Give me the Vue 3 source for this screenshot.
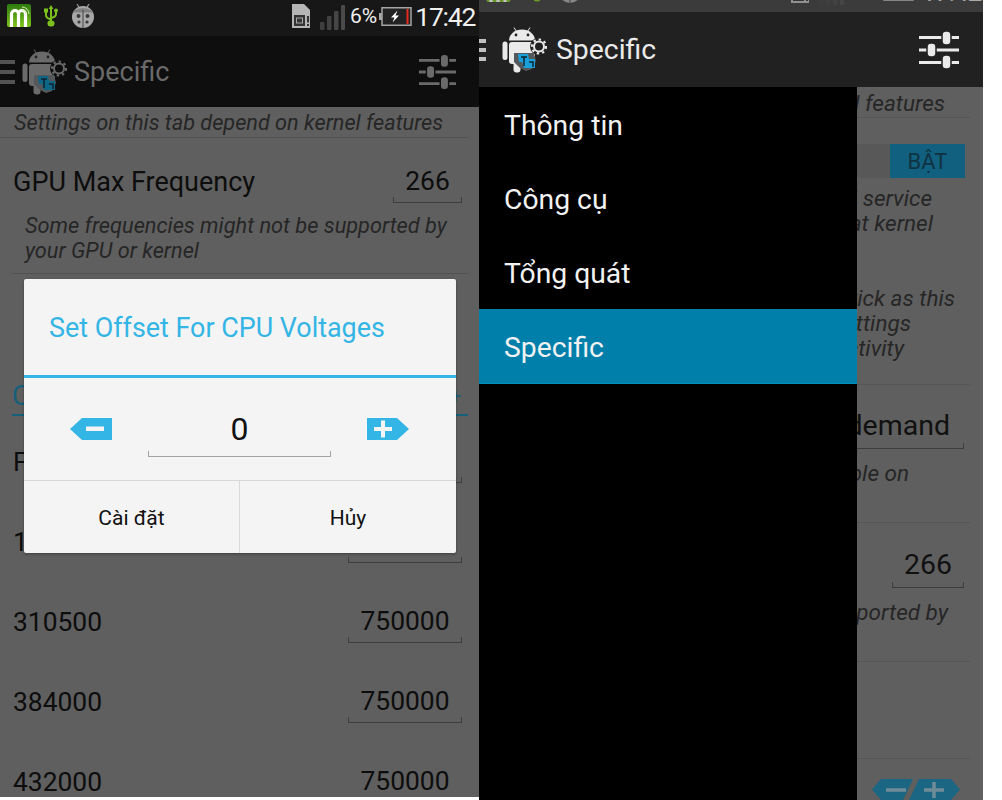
<script setup>
const voltageRows = [
  { freq: 'Frequency', volt: '' },
  { freq: '188000', volt: '750000' },
  { freq: '310500', volt: '750000' },
  { freq: '384000', volt: '750000' },
  { freq: '432000', volt: '750000' }
]
const drawerItems = [
  { label: 'Thông tin', active: false },
  { label: 'Công cụ', active: false },
  { label: 'Tổng quát', active: false },
  { label: 'Specific', active: true }
]
const serviceLines = [
  { text: 'background service', right: 51 },
  { text: 'without that kernel', right: 50 }
]
const quickLines = [
  { text: 'Do not tick as this', right: 28 },
  { text: 'settings', right: 72 },
  { text: 'activity', right: 79 }
]
</script>

<template>
  <div class="page">
    <svg class="defs" width="0" height="0" aria-hidden="true">
      <symbol id="droid" viewBox="0 0 45 47">
        <path d="M12 1.500l2.500 4M28 1.500l-2.500 4" stroke="currentColor" stroke-width="1" fill="none" />
        <path d="M7 14.500a13 11 0 0 1 26 0z" fill="currentColor" />
        <circle cx="14" cy="9" r="1.400" fill="#222" />
        <circle cx="26" cy="9" r="1.400" fill="#222" />
        <rect x="7" y="16" width="26" height="22" rx="3" fill="currentColor" />
        <rect x="11.500" y="34" width="7" height="12.500" rx="3" fill="currentColor" />
        <rect x="21.500" y="34" width="7" height="10" rx="3" fill="currentColor" />
        <rect x="0.500" y="15.500" width="5" height="18.500" rx="2.500" fill="currentColor" />
        <circle cx="37" cy="20.500" r="9" fill="var(--bar)" />
        <circle cx="37" cy="20.500" r="5" fill="none" stroke="currentColor" stroke-width="2" />
        <circle cx="37" cy="20.500" r="7" fill="none" stroke="currentColor" stroke-width="2.200" stroke-dasharray="2.400 3" />
        <path d="M12 27h20l2 8-4 8-6 2-6-3-6-6z" fill="#55585a" />
        <path d="M16 28h10l1 5h6v9H22l-2-6h-3z" fill="var(--tile)" />
        <path d="M19 31h6M22 31v9M27 36h4v5" stroke="#123" stroke-width="1.500" fill="none" />
      </symbol>
      <symbol id="tune" viewBox="0 0 40 38">
        <g fill="none" stroke="currentColor" stroke-width="3">
          <path d="M0 6.500h40M0 19h40M0 31.500h40" />
        </g>
        <g fill="currentColor" stroke="var(--bar)" stroke-width="1.500">
          <rect x="23" y="0" width="9" height="14" rx="4" />
          <rect x="8" y="12" width="9" height="14" rx="4" />
          <rect x="23" y="24" width="9" height="14" rx="4" />
        </g>
      </symbol>
      <symbol id="mapp" viewBox="0 0 24 23">
        <defs>
          <linearGradient id="mgrad" x1="0" y1="0" x2="0" y2="1">
            <stop offset="0" stop-color="#2d7a10" />
            <stop offset="1" stop-color="#7fc41c" />
          </linearGradient>
        </defs>
        <rect width="24" height="23" rx="2" fill="url(#mgrad)" />
        <path d="M4.500 23V10a3.500 3.500 0 0 1 7 0v13M11.500 10a3.500 3.500 0 0 1 7 0v13" fill="none" stroke="#fff" stroke-width="3.200" />
        <path d="M15 3a7 7 0 0 1 7 7M15 6a4 4 0 0 1 4 4" fill="none" stroke="#d8ecb0" stroke-width="1" />
      </symbol>
      <symbol id="usb" viewBox="0 0 14 22">
        <path d="M7 0l2.400 4H8v11.500a3 3 0 0 1-1 6 3 3 0 0 1-1-6V4H4.600z" fill="#7cc11d" />
        <path d="M2 7v3.500q0 2.500 5 4M12 7v2q0 3-5 4" fill="none" stroke="#7cc11d" stroke-width="2" />
        <rect x="0" y="3.500" width="4" height="4" fill="#7cc11d" />
        <circle cx="12" cy="5.500" r="2" fill="#7cc11d" />
      </symbol>
      <symbol id="bug" viewBox="0 0 24 24">
        <path d="M6 0l3 5M18 0l-3 5" stroke="#9a9a9a" stroke-width="1.200" />
        <circle cx="12" cy="13" r="11" fill="#a8a8a8" />
        <path d="M3 6.500q9-5 18 0l1 2H2z" fill="#808080" />
        <path d="M12 6v18" stroke="#444" stroke-width="1" />
        <circle cx="7.500" cy="12" r="2" fill="#3a3a3a" />
        <circle cx="16.500" cy="12" r="2" fill="#3a3a3a" />
        <circle cx="8" cy="18" r="1.600" fill="#3a3a3a" />
        <circle cx="16" cy="18" r="1.600" fill="#3a3a3a" />
      </symbol>
      <symbol id="sim" viewBox="0 0 18 24">
        <path d="M0 0h12l6 6v18H0z" fill="#b5b5b5" />
        <rect x="2" y="11" width="11" height="11" fill="#333" />
        <rect x="4.500" y="14" width="6" height="5" fill="none" stroke="#aaa" stroke-width="1" />
        <rect x="15" y="12" width="2" height="6.500" fill="#333" />
        <rect x="15" y="20" width="2" height="2" fill="#333" />
      </symbol>
      <symbol id="bars" viewBox="0 0 25 25">
        <rect x="0" y="17" width="4.500" height="8" rx="1" fill="#3f3f3f" />
        <rect x="7" y="11" width="4.500" height="14" rx="1" fill="#424242" />
        <rect x="14" y="6" width="4.500" height="19" rx="1" fill="#464646" />
        <rect x="21" y="0" width="4" height="25" rx="1" fill="#4a4a4a" />
      </symbol>
      <symbol id="batt" viewBox="0 0 33 19">
        <rect x="3" y="0.750" width="29" height="17.500" fill="#222" stroke="#a5a5a5" stroke-width="1.500" />
        <rect x="0" y="6" width="3" height="7" fill="#a5a5a5" />
        <rect x="27.500" y="2" width="2" height="15" fill="#e52b1c" />
        <path d="M18.500 3.500l-6.500 7h3.500l-2 5 6.500-7h-3.500z" fill="#fff" />
      </symbol>
    </svg>

    <!-- Left phone: dialog over a dimmed settings page -->
    <section class="phone phone-left">
      <div class="status">
        <svg class="i-m"><use href="#mapp" /></svg>
        <svg class="i-usb"><use href="#usb" /></svg>
        <svg class="i-bug"><use href="#bug" /></svg>
        <svg class="i-sim"><use href="#sim" /></svg>
        <svg class="i-bars"><use href="#bars" /></svg>
        <span class="pct">6%</span>
        <svg class="i-batt"><use href="#batt" /></svg>
        <span class="clock">17:42</span>
      </div>
      <header class="bar">
        <div class="burger"><i></i><i></i><i></i></div>
        <svg class="droid"><use href="#droid" /></svg>
        <span class="bar-title">Specific</span>
        <svg class="tune"><use href="#tune" /></svg>
      </header>

      <main class="page-body">
        <p class="top-hint">Settings on this tab depend on kernel features</p>
        <div class="gpu-row">
          <span class="label label-gpu">GPU Max Frequency</span>
          <span class="val val-short">266</span>
        </div>
        <p class="hint">Some frequencies might not be supported by<br />your GPU or kernel</p>
        <div class="section-head">
          <span>CPU Voltages</span>
          <span class="plus">+</span>
        </div>
        <div v-for="row in voltageRows" :key="row.freq" class="v-row">
          <span class="label">{{ row.freq }}</span>
          <span class="val val-wide">{{ row.volt || '&#160;' }}</span>
        </div>
      </main>

      <div class="dialog">
        <h2 class="d-title">Set Offset For CPU Voltages</h2>
        <div class="d-body">
          <svg class="step" viewBox="0 0 42 22">
            <path d="M0 11L12 0h30v22H12z" fill="#33b5e5" />
            <rect x="16" y="8.500" width="18" height="4.500" fill="#f4f4f4" />
          </svg>
          <div class="d-input">0</div>
          <svg class="step" viewBox="0 0 42 22">
            <path d="M42 11L30 22H0V0h30z" fill="#33b5e5" />
            <path d="M7 11h18M16 2.500v17" stroke="#f4f4f4" stroke-width="4" />
          </svg>
        </div>
        <div class="d-actions">
          <button type="button">Cài đặt</button>
          <button type="button">Hủy</button>
        </div>
      </div>
    </section>

    <!-- Right phone: navigation drawer open -->
    <section class="phone phone-right">
      <div class="status">
        <div class="status-inner">
          <svg class="i-m"><use href="#mapp" /></svg>
          <svg class="i-usb"><use href="#usb" /></svg>
          <svg class="i-bug"><use href="#bug" /></svg>
          <svg class="i-sim"><use href="#sim" /></svg>
          <svg class="i-bars"><use href="#bars" /></svg>
          <span class="pct">6%</span>
          <svg class="i-batt"><use href="#batt" /></svg>
          <span class="clock">17:42</span>
        </div>
      </div>
      <header class="bar">
        <div class="burger"><i></i><i></i><i></i></div>
        <svg class="droid"><use href="#droid" /></svg>
        <span class="bar-title">Specific</span>
        <svg class="tune"><use href="#tune" /></svg>
      </header>

      <div class="split">
        <nav class="drawer">
          <a v-for="item in drawerItems" :key="item.label" :class="{ active: item.active }">{{ item.label }}</a>
        </nav>
        <div class="strip">
          <p class="s-line s-first">depend on kernel features</p>
          <hr class="s-div" />
          <div class="toggle"><span class="track"></span><span class="on">BẬT</span></div>
          <div class="s-group g1">
            <p v-for="l in serviceLines" :key="l.text" class="s-line" :style="{ paddingRight: l.right + 'px' }">{{ l.text }}</p>
          </div>
          <div class="s-group g2">
            <p v-for="l in quickLines" :key="l.text" class="s-line" :style="{ paddingRight: l.right + 'px' }">{{ l.text }}</p>
          </div>
          <hr class="s-div d3" />
          <div class="s-val s-demand"><span>ondemand</span></div>
          <p class="s-line s-on">Not available on</p>
          <hr class="s-div d4" />
          <div class="s-val s-266">266</div>
          <p class="s-line s-by">not be supported by</p>
          <hr class="s-div d4" />
          <hr class="s-div d5" />
          <svg class="s-step" viewBox="0 0 88 21">
            <path d="M0 10.500L9 0h32l-10 21H9z" fill="#1b6682" />
            <path d="M47 0h32l9 10.500L79 21H37z" fill="#1b6682" />
            <path d="M14 11h20M52 11h20M62 3v16" stroke="#6f8c98" stroke-width="3.500" fill="none" />
          </svg>
        </div>
      </div>
    </section>
  </div>
</template>

<style>
html, body { margin: 0; background: #fff; }
</style>

<style scoped>
.page {
  display: flex;
  align-items: flex-start;
  width: 1002px;
  height: 800px;
  overflow: hidden;
  background: #fff;
  font-family: Roboto, "Noto Sans", sans-serif;
}
.defs { position: absolute; }
.phone { position: relative; flex: none; overflow: hidden; background: #5f5f5f; }
.phone-left { width: 479px; height: 797px; }
.phone-right { width: 504px; height: 800px; }
p { margin: 0; }

/* status bars */
.status { display: flex; align-items: flex-start; }
.phone-left .status { height: 36px; background: #171717; color: #f0f0f0; }
.phone-right .status { height: 12px; background: #3b3b3b; color: #d8d8d8; overflow: hidden; }
.status-inner { display: flex; align-items: flex-start; width: 100%; margin-top: -25px; height: 36px; opacity: .7; }
.status svg { flex: none; }
.i-m { width: 24px; height: 23px; margin: 4px 0 0 7px; }
.i-usb { width: 14px; height: 22px; margin: 5px 0 0 13px; }
.i-bug { width: 24px; height: 24px; margin: 4px 0 0 13px; }
.i-sim { width: 18px; height: 24px; margin: 4px 0 0 197px; }
.i-bars { width: 25px; height: 25px; margin: 5px 0 0 10px; }
.i-batt { width: 33px; height: 19px; margin: 7px 0 0 2px; }
.pct { font-size: 21px; line-height: 32px; margin-left: 5px; }
.clock { font-size: 26.500px; line-height: 33px; margin-left: 3px; letter-spacing: -1.200px; }
.phone-right .i-m { margin-left: 7px; width: 25px; }
.phone-right .i-usb { margin-left: 19px; }
.phone-right .i-bug { margin-left: 14px; }
.phone-right .i-sim { margin-left: 209px; }
.phone-right .pct { margin-left: 8px; }
.phone-right .clock { margin-left: 7px; }

/* action bars */
.bar { display: flex; align-items: center; --tile: #1aa0d8; }
.phone-left .bar { height: 71px; background: #0e0e0e; color: #6a6a6a; --bar: #0e0e0e; --tile: #0c6684; }
.phone-right .bar { height: 75px; background: #212121; color: #eaeaea; --bar: #212121; }
.burger { display: flex; flex-direction: column; flex: none; }
.burger i { display: block; height: 4px; background: currentColor; }
.phone-left .burger { width: 15px; gap: 6px; opacity: .75; }
.phone-right .burger { width: 7px; gap: 5px; margin-left: 0; opacity: .8; }
.droid { flex: none; width: 45px; height: 47px; }
.phone-left .droid { margin-left: 7px; }
.phone-right .droid { margin-left: 16px; }
.bar-title { font-size: 28.400px; line-height: 34px; }
.phone-left .bar-title { margin-left: 7px; font-size: 27px; }
.phone-right .bar-title { margin-left: 9px; }
.tune { flex: none; margin-left: auto; }
.phone-left .tune { width: 37px; height: 38px; margin-right: 23px; }
.phone-right .tune { width: 40px; height: 38px; margin-right: 24px; }

/* settings page (left) */
.page-body { color: #0d0d0d; }
.top-hint {
  height: 30px;
  line-height: 32px;
  padding-left: 14px;
  font-style: italic;
  font-size: 21.700px;
  color: #262626;
  border-bottom: 1px solid #525252;
  margin: 0 11px 0 0;
}
.gpu-row { display: flex; justify-content: space-between; height: 76px; box-sizing: border-box; padding: 27px 17px 0 13px; }
.label { font-size: 26.400px; line-height: 34px; }
.label-gpu { font-size: 27px; }
.val { display: block; flex: none; text-align: center; font-size: 26.400px; line-height: 32px; }
.val::after {
  content: "";
  display: block;
  height: 5px;
  border: 1px solid #3e3e3e;
  border-top: 0;
}
.val-short { width: 69px; }
.val-wide { width: 114px; }
.hint {
  margin-left: 25px;
  padding-bottom: 10px;
  font-style: italic;
  font-size: 21.750px;
  line-height: 24.500px;
  color: #262626;
}
.section-head {
  display: flex;
  justify-content: space-between;
  align-items: flex-end;
  height: 143px;
  box-sizing: border-box;
  margin: 0 11px 0 12px;
  border-top: 1px solid #525252;
  border-bottom: 2px solid #165f7a;
  color: #165f7a;
  font-size: 27px;
  line-height: 36px;
}
.plus { font-size: 20px; margin-right: 7px; }
.v-row { display: flex; justify-content: space-between; height: 80px; box-sizing: border-box; padding: 29px 17px 0 13px; }

/* dialog (left) */
.dialog {
  position: absolute;
  left: 24px;
  top: 279px;
  width: 432px;
  height: 274px;
  display: flex;
  flex-direction: column;
  background: #f4f4f4;
  border-radius: 2px;
  box-shadow: 0 1px 3px rgba(0, 0, 0, .35);
}
.d-title {
  flex: none;
  height: 99px;
  margin: 0;
  padding-left: 25px;
  box-sizing: border-box;
  font-weight: 400;
  font-size: 26.900px;
  line-height: 98px;
  color: #33b5e5;
  border-bottom: 3px solid #33b5e5;
}
.d-body {
  flex: 1;
  display: flex;
  align-items: flex-start;
  justify-content: space-between;
  padding: 0 47px 0 46px;
}
.step { flex: none; width: 42px; height: 22px; margin-top: 40px; }
.d-input {
  width: 183px;
  margin-top: 30px;
  text-align: center;
  font-size: 32px;
  line-height: 43px;
  color: #111;
}
.d-input::after {
  content: "";
  display: block;
  height: 5px;
  border: 1px solid #a3a3a3;
  border-top: 0;
}
.d-actions { flex: none; height: 73px; display: grid; grid-template-columns: 215px 1fr; border-top: 1px solid #d9d9d9; box-sizing: border-box; }
.d-actions button {
  border: 0;
  padding: 2px 0 0;
  background: none;
  font: 400 21px/1 Roboto, sans-serif;
  color: #111;
}
.d-actions button + button { border-left: 1px solid #d9d9d9; }

/* right panel */
.split { display: flex; height: 713px; }
.drawer { flex: none; width: 378px; height: 100%; background: #000; display: flex; flex-direction: column; }
.drawer a {
  height: 74px;
  line-height: 78px;
  padding-left: 25px;
  font-size: 28.300px;
  color: #f2f2f2;
}
.drawer a.active { background: #007fab; border-bottom: 1px solid #0090bf; box-sizing: border-box; height: 75px; }
.strip { flex: 1; min-width: 0; overflow: hidden; color: #141414; }
.s-line {
  display: flex;
  justify-content: flex-end;
  white-space: nowrap;
  font-style: italic;
  font-size: 22.500px;
  line-height: 25px;
  color: #262626;
}
.s-first { height: 30px; line-height: 32px; padding-right: 38px; }
.s-div { margin: 0 13px 0 0; border: 0; border-top: 1px solid #565656; }
.toggle { display: flex; height: 34px; margin: 26px 18px 0 0; }
.track { width: 33px; background: #585858; }
.on { width: 75px; background: #12607f; color: #0f3342; text-align: center; font-size: 22px; line-height: 36px; }
.g1 { margin-top: 8px; }
.g2 { margin-top: 50px; }
.d3 { margin-top: 23px; }
.s-val {
  margin-right: 19px;
  font-size: 28.500px;
  line-height: 34px;
  white-space: nowrap;
  color: #111;
}
.s-val > span { display: flex; justify-content: flex-end; padding-right: 14px; }
.s-val::after {
  content: "";
  display: block;
  height: 5px;
  border: 1px solid #3e3e3e;
  border-top: 0;
  border-left: 0;
}
.s-demand { margin-top: 24px; }
.s-on { margin-top: 12px; padding-right: 74px; }
.d4 { margin-top: 36px; }
.s-266 { margin-top: 25px; margin-left: 35px; text-align: center; }
.s-266::after { border-left: 1px solid #3e3e3e; }
.s-by { margin-top: 12px; padding-right: 35px; }
.d5 { margin-top: 96px; }
.s-step { display: block; width: 88px; height: 21px; margin: 20px 0 0 15px; }
</style>
